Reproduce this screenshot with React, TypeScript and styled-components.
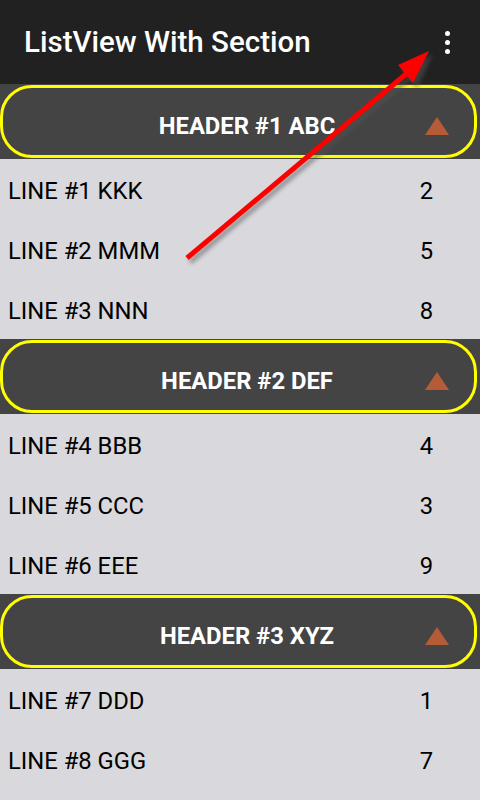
import React from 'react';
import styled, { createGlobalStyle } from 'styled-components';

const GlobalStyle = createGlobalStyle`
  html, body {
    margin: 0;
    padding: 0;
    background: #d9d8dd;
    font-family: Roboto, "Liberation Sans", sans-serif;
  }
`;

const Screen = styled.div`
  position: relative;
  width: 480px;
  height: 800px;
  overflow: hidden;
  background: #d9d8dd;
`;

const AppBar = styled.header`
  display: flex;
  align-items: center;
  justify-content: space-between;
  height: 84px;
  padding: 0 30px 0 24px;
  box-sizing: border-box;
  background: #212121;
  color: #fff;

  h1 {
    margin: 0;
    font-size: 29.5px;
    font-weight: 500;
  }
`;

const MenuDots = styled.div`
  display: flex;
  flex-direction: column;
  gap: 4px;

  span {
    width: 5px;
    height: 5px;
    border-radius: 50%;
    background: #fff;
  }
`;

const HeaderBand = styled.div`
  background: #444;
  padding: 1px 3px 1px 0;
`;

const HeaderPill = styled.div`
  display: flex;
  align-items: center;
  height: 73px;
  box-sizing: border-box;
  border: 3px solid #ffff00;
  border-radius: 32px;
  padding: 8px 25px 0 66px;

  h2 {
    flex: 1;
    margin: 0;
    text-align: center;
    color: #fff;
    font-size: 23.8px;
    font-weight: 700;
  }
`;

const Triangle = styled.div`
  width: 0;
  height: 0;
  border-left: 12px solid transparent;
  border-right: 12px solid transparent;
  border-bottom: 18px solid #b65b37;
`;

const Row = styled.div`
  display: flex;
  align-items: center;
  justify-content: space-between;
  height: 60px;
  box-sizing: border-box;
  padding: 3px 47px 0 8px;
  font-size: 23.8px;
  color: #000;
`;

const Overlay = styled.svg`
  position: absolute;
  left: 0;
  top: 0;
  pointer-events: none;
`;

const sections = [
  { title: 'HEADER #1 ABC', items: [['LINE #1 KKK', 2], ['LINE #2 MMM', 5], ['LINE #3 NNN', 8]] },
  { title: 'HEADER #2 DEF', items: [['LINE #4 BBB', 4], ['LINE #5 CCC', 3], ['LINE #6 EEE', 9]] },
  { title: 'HEADER #3 XYZ', items: [['LINE #7 DDD', 1], ['LINE #8 GGG', 7]] },
];

const App = () => (
  <Screen>
    <GlobalStyle />
    <AppBar>
      <h1>ListView With Section</h1>
      <MenuDots>
        <span />
        <span />
        <span />
      </MenuDots>
    </AppBar>
    {sections.map((s) => (
      <React.Fragment key={s.title}>
        <HeaderBand>
          <HeaderPill>
            <h2>{s.title}</h2>
            <Triangle />
          </HeaderPill>
        </HeaderBand>
        {s.items.map(([label, n]) => (
          <Row key={label}>
            <span>{label}</span>
            <span>{n}</span>
          </Row>
        ))}
      </React.Fragment>
    ))}
    <Overlay width='480' height='800'>
      <defs>
        <filter id='shadow' x='-20%' y='-20%' width='140%' height='140%'>
          <feGaussianBlur stdDeviation='2' />
        </filter>
      </defs>
      <g transform='translate(3 4)' fill='#555' stroke='#555' opacity='0.55' filter='url(#shadow)'>
        <line x1='187' y1='258' x2='412' y2='69' strokeWidth='5' />
        <polygon points='429,51 399,66 414,83' />
      </g>
      <line x1='187' y1='258' x2='412' y2='69' stroke='#ff0000' strokeWidth='5' />
      <polygon points='429,51 398,65 413,83' fill='#ff0000' />
    </Overlay>
  </Screen>
);

export default App;
